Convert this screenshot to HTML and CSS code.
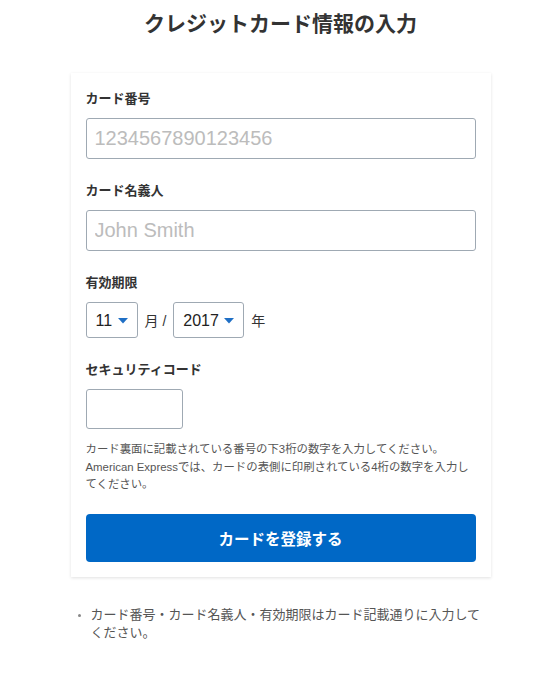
FILE: index.html
```html
<!DOCTYPE html>
<html lang="ja">
<head>
    <meta charset="UTF-8">
    <meta name="viewport" content="width=device-width, initial-scale=1.0">
    <title>クレジットカード情報の入力</title>
    <link rel="stylesheet" href="styles.css">
</head>
<body>
    <div class="page">
        <h1>クレジットカード情報の入力</h1>
        <form class="card-box">
            <div class="field">
                <label class="field-label" for="number">カード番号</label>
                <input class="text-input" type="text" id="number" placeholder="1234567890123456">
            </div>
            <div class="field">
                <label class="field-label" for="name">カード名義人</label>
                <input class="text-input" type="text" id="name" placeholder="John Smith">
            </div>
            <div class="field">
                <span class="field-label">有効期限</span>
                <div class="expiry">
                    <span class="select-wrap month">
                        <select>
                            <option>11</option>
                        </select>
                        <svg class="caret" width="10" height="6" viewBox="0 0 10 6"><path d="M0 0h10L5 5.5z" fill="#1f6fc5"/></svg>
                    </span>
                    <span class="unit">月 /</span>
                    <span class="select-wrap year">
                        <select>
                            <option>2017</option>
                        </select>
                        <svg class="caret" width="10" height="6" viewBox="0 0 10 6"><path d="M0 0h10L5 5.5z" fill="#1f6fc5"/></svg>
                    </span>
                    <span class="unit">年</span>
                </div>
            </div>
            <div class="field field-cvc">
                <label class="field-label" for="cvc">セキュリティコード</label>
                <input class="text-input cvc" type="text" id="cvc">
                <p class="help">カード裏面に記載されている番号の下3桁の数字を入力してください。American Expressでは、カードの表側に印刷されている4桁の数字を入力してください。</p>
            </div>
            <button type="submit" class="submit">カードを登録する</button>
        </form>
        <ul class="notes">
            <li>カード番号・カード名義人・有効期限はカード記載通りに入力してください。</li>
        </ul>
    </div>
</body>
</html>
```

FILE: styles.css
```css
* {
    margin: 0;
    padding: 0;
    box-sizing: border-box;
}

body {
    background-color: #ffffff;
    color: #333333;
    font-family: "Liberation Sans", "Noto Sans CJK JP", sans-serif;
}

.page {
    width: 420px;
    margin: 0 auto;
    position: relative;
    left: 4px;
}

h1 {
    font-size: 21px;
    font-weight: 700;
    line-height: 30px;
    text-align: center;
    padding-top: 9px;
    margin-bottom: 34px;
    color: #333333;
}

.card-box {
    background-color: #ffffff;
    padding: 16px 15px 15px;
    box-shadow: 0 1px 3px rgba(0, 0, 0, 0.12);
}

.field {
    margin-bottom: 22px;
}

.field-label {
    display: block;
    font-size: 13px;
    font-weight: 700;
    line-height: 20px;
    margin-bottom: 9px;
    color: #333333;
}

.text-input {
    display: block;
    width: 100%;
    height: 41px;
    padding: 0 8px;
    border: 1px solid #9fa9b3;
    border-radius: 3px;
    background-color: #ffffff;
    font-family: "Liberation Sans", sans-serif;
    font-size: 20px;
    color: #333333;
}

.text-input::placeholder {
    color: #bcbcbc;
}

.text-input.cvc {
    width: 97px;
    height: 40px;
    margin-top: 1px;
    font-size: 16px;
}

.expiry {
    display: flex;
    align-items: center;
    gap: 7px;
}

.select-wrap {
    position: relative;
    display: block;
    height: 36px;
}

.select-wrap select {
    appearance: none;
    -webkit-appearance: none;
    width: 100%;
    height: 100%;
    padding: 0 0 0 9px;
    border: 1px solid #9fa9b3;
    border-radius: 3px;
    background-color: #ffffff;
    font-family: "Liberation Sans", sans-serif;
    font-size: 16px;
    color: #222222;
}

.select-wrap.month {
    width: 52px;
}

.select-wrap.year {
    width: 71px;
}

.caret {
    position: absolute;
    right: 10px;
    top: 16px;
    pointer-events: none;
}

.unit {
    font-size: 14px;
    color: #333333;
}

.help {
    margin-top: 12px;
    font-size: 11.4px;
    line-height: 17.5px;
    color: #555555;
}

.field-cvc {
    margin-bottom: 20px;
}

.submit {
    display: block;
    width: 100%;
    height: 48px;
    border: none;
    border-radius: 4px;
    background-color: #0068c6;
    color: #ffffff;
    font-family: "Liberation Sans", "Noto Sans CJK JP", sans-serif;
    font-size: 15.5px;
    font-weight: 700;
    cursor: pointer;
}

.notes {
    margin-top: 29px;
    padding-left: 20px;
    font-size: 13px;
    line-height: 18px;
    color: #555555;
}

.notes li::marker {
    font-size: 10px;
    color: #888888;
}
```
